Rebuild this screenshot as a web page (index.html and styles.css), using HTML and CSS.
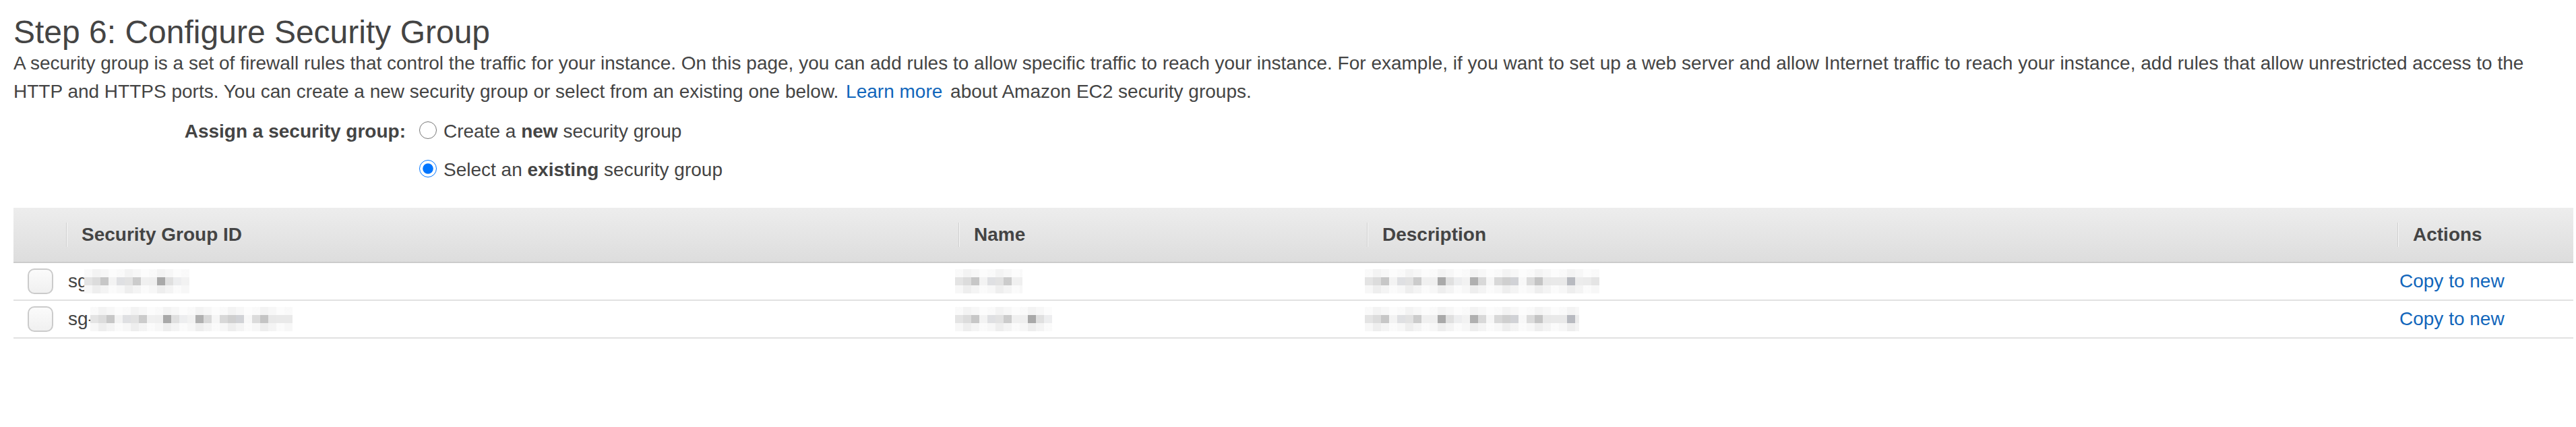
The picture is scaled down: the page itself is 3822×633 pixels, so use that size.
FILE: index.html
```html
<!DOCTYPE html>
<html lang="en">
<head>
<meta charset="utf-8">
<title>Step 6: Configure Security Group</title>
<link rel="stylesheet" href="styles.css">
</head>
<body>
<div class="page">
  <h1 class="title">Step 6: Configure Security Group</h1>
  <p class="intro">A security group is a set of firewall rules that control the traffic for your instance. On this page, you can add rules to allow specific traffic to reach your instance. For example, if you want to set up a web server and allow Internet traffic to reach your instance, add rules that allow unrestricted access to the HTTP and HTTPS ports. You can create a new security group or select from an existing one below. <a class="link" href="#">Learn more</a> about Amazon EC2 security groups.</p>

  <div class="assign">
    <div class="assign-label">Assign a security group:</div>
    <div class="options">
      <label class="option"><input class="radio" type="radio" name="sg">Create a <b>new</b> security group</label>
      <label class="option"><input class="radio" type="radio" name="sg" checked>Select an <b>existing</b> security group</label>
    </div>
  </div>

  <table class="sg-table">
    <colgroup>
      <col class="c-check">
      <col class="c-id">
      <col class="c-name">
      <col class="c-desc">
      <col class="c-act">
    </colgroup>
    <thead>
      <tr>
        <th></th>
        <th><div class="th-inner">Security Group ID</div></th>
        <th><div class="th-inner">Name</div></th>
        <th><div class="th-inner">Description</div></th>
        <th><div class="th-inner">Actions</div></th>
      </tr>
    </thead>
    <tbody>
      <tr>
        <td class="check-cell"><span class="checkbox"></span></td>
        <td><span class="sg">sg</span><span class="pix pix-id1"></span></td>
        <td><span class="pix pix-name1"></span></td>
        <td><span class="pix pix-desc1"></span></td>
        <td><a class="link" href="#">Copy to new</a></td>
      </tr>
      <tr>
        <td class="check-cell"><span class="checkbox"></span></td>
        <td><span class="sg">sg-</span><span class="pix pix-id2"></span></td>
        <td><span class="pix pix-name2"></span></td>
        <td><span class="pix pix-desc2"></span></td>
        <td><a class="link" href="#">Copy to new</a></td>
      </tr>
    </tbody>
  </table>
</div>
</body>
</html>
```

FILE: styles.css
```css
html, body {
  margin: 0;
  padding: 0;
  background: #ffffff;
}

body {
  font-family: "Liberation Sans", Arial, sans-serif;
  color: #444444;
  font-size: 28px;
}

.page {
  padding: 22px 4px 0 20px;
}

.title {
  margin: 0;
  font-size: 48px;
  font-weight: normal;
  line-height: 51px;
  color: #444444;
}

.intro {
  margin: 0;
  line-height: 42px;
}

.link {
  color: #1166bb;
  text-decoration: none;
}

.intro .link {
  margin: 0 4px 0 3px;
}

.assign {
  display: grid;
  grid-template-columns: 582px 1fr;
  column-gap: 20px;
  margin-top: 17px;
}

.assign-label {
  text-align: right;
  font-weight: bold;
  line-height: 42px;
}

.options {
  display: flex;
  flex-direction: column;
  gap: 15px;
}

.option {
  display: flex;
  align-items: center;
  line-height: 42px;
  white-space: pre;
}

.radio {
  width: 26px;
  height: 26px;
  margin: 0 10px 4px 0;
  accent-color: #0075ff;
}

.sg-table {
  margin-top: 35px;
  width: 100%;
  border-collapse: collapse;
  table-layout: fixed;
}

.c-check { width: 78px; }
.c-id { width: 1324px; }
.c-name { width: 606px; }
.c-desc { width: 1529px; }
.c-act { width: auto; }

.sg-table th {
  height: 80px;
  padding: 0;
  text-align: left;
  font-weight: bold;
  color: #444444;
  background: linear-gradient(#ededed, #dddddd);
  border-bottom: 2px solid #cccccc;
  vertical-align: middle;
}

.th-inner {
  border-left: 1px solid #cfcfcf;
  box-shadow: inset 1px 0 0 #f7f7f7;
  padding-left: 22px;
  line-height: 36px;
}

.sg-table td {
  height: 54px;
  padding: 0 0 0 3px;
  border-bottom: 2px solid #e1e1e1;
  vertical-align: middle;
  white-space: nowrap;
  line-height: 32px;
}

.sg-table td.check-cell {
  padding-left: 21px;
}

.checkbox {
  display: block;
  box-sizing: border-box;
  width: 38px;
  height: 38px;
  border: 2px solid #cbcbcb;
  border-radius: 10px;
  background: linear-gradient(#fbfbfb, #f0f0f0);
}

.sg {
  vertical-align: middle;
}

.pix {
  display: inline-block;
  height: 36px;
  vertical-align: middle;
  margin-left: -6px;
  background:
    repeating-linear-gradient(90deg, rgba(255,255,255,0.55) 0 12px, rgba(255,255,255,0) 12px 24px, rgba(255,255,255,0.35) 24px 36px, rgba(255,255,255,0.75) 36px 48px),
    linear-gradient(#f3f3f3 0 12px, transparent 12px 24px, #eeeeee 24px 36px),
    repeating-linear-gradient(90deg, #c4c4c4 0 12px, #dcdcdc 12px 24px, #a9a9a9 24px 36px, #cfcfcf 36px 48px, #b8bac0 48px 60px, #e2e2e2 60px 72px, #b0b0b0 72px 84px);
}

.pix-id1 { width: 156px; }
.pix-id2 { width: 300px; }
.pix-name1 { width: 100px; margin-left: -8px; }
.pix-name2 { width: 144px; margin-left: -8px; }
.pix-desc1 { width: 348px; }
.pix-desc2 { width: 318px; }
```
